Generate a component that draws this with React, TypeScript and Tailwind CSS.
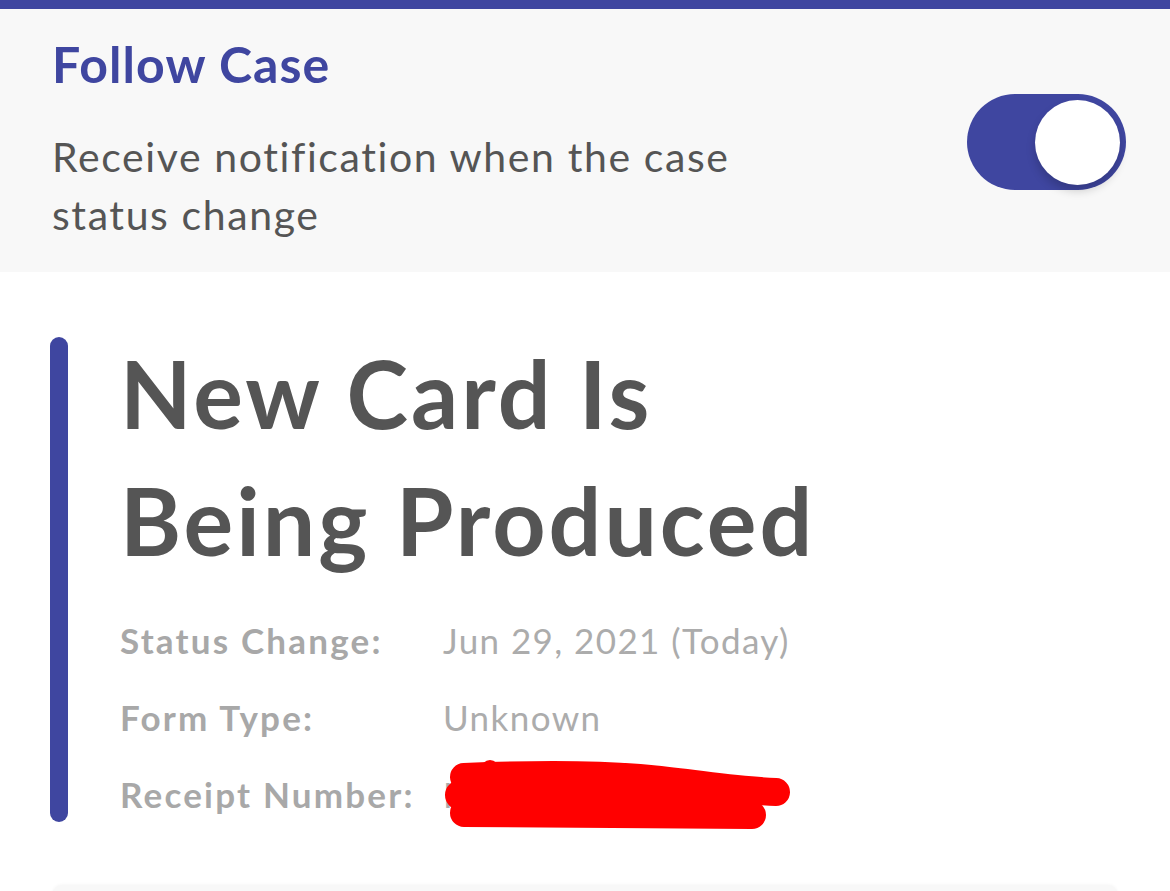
import { FunctionComponent } from 'react'

const font = { fontFamily: 'Lato, "Noto Sans", sans-serif' }

const Toggle: FunctionComponent<{ on: boolean }> = ({ on }) => (
  <div
    className={`w-[159px] h-[96px] rounded-full flex items-center px-[6px] ${
      on ? 'bg-[#3f46a0] justify-end' : 'bg-gray-300 justify-start'
    }`}
  >
    <div className="w-[85px] h-[85px] rounded-full bg-white shadow-[0_6px_10px_rgba(0,0,0,0.18)]" />
  </div>
)

const Redaction = () => (
  <svg
    className="absolute left-[-3px] top-[1px]"
    width="360"
    height="80"
    viewBox="0 0 360 80"
  >
    <g stroke="#ff0000" strokeLinecap="round" fill="none">
      <path d="M 24 20 C 100 17 160 17 210 22 S 300 34 336 35" strokeWidth="28" />
      <path d="M 24 56 L 312 58" strokeWidth="28" />
      <path d="M 20 38 L 300 44" strokeWidth="30" />
    </g>
    <circle cx="50" cy="12" r="9" fill="#ff0000" />
  </svg>
)

interface RowProps {
  label: string
  value?: string
  redacted?: boolean
}
const Row: FunctionComponent<RowProps> = ({ label, value, redacted }) => (
  <div className="flex items-baseline h-[77px]">
    <div className="w-[323px] shrink-0 font-bold text-[#a8a8a8] tracking-[2.2px]">{label}</div>
    <div className="relative text-[#acacac] tracking-[1.4px]">
      {redacted ? (
        <>
          <span>I</span>
          <Redaction />
        </>
      ) : (
        value
      )}
    </div>
  </div>
)

export default function App() {
  return (
    <div className="w-[1170px] h-[891px] bg-white overflow-hidden" style={font}>
      <div className="h-[9px] bg-[#3f46a0]" />
      <div className="h-[263px] bg-[#f8f8f8] px-[52px] flex justify-between">
        <div className="pt-[25px]">
          <h2 className="text-[50px] leading-[60px] font-bold text-[#3f46a0] tracking-[1.1px]">
            Follow Case
          </h2>
          <p className="mt-[34px] w-[720px] text-[41px] leading-[58px] text-[#555555] tracking-[1.6px]">
            Receive notification when the case status change
          </p>
        </div>
        <div className="pt-[85px] mr-[-8px]">
          <Toggle on />
        </div>
      </div>

      <div className="pt-[65px] px-[50px]">
        <div className="flex h-[485px]">
          <div className="w-[18px] h-[485px] rounded-full bg-[#3f46a0] shrink-0" />
          <div className="pl-[52px]">
            <h1 className="text-[93px] leading-[127px] font-bold text-[#555555] tracking-[3px] mt-[-7px]">
              New Card Is
              <br />
              Being Produced
            </h1>
            <div className="mt-[18px] text-[35px] leading-[77px]">
              <Row label="Status Change:" value="Jun 29, 2021 (Today)" />
              <Row label="Form Type:" value="Unknown" />
              <Row label="Receipt Number:" redacted />
            </div>
          </div>
        </div>
        <div className="mt-[63px] mx-[2px] h-[40px] rounded-t-[10px] bg-[#f8f8f8] shadow-[0_-1px_3px_rgba(0,0,0,0.03)]" />
      </div>
    </div>
  )
}
